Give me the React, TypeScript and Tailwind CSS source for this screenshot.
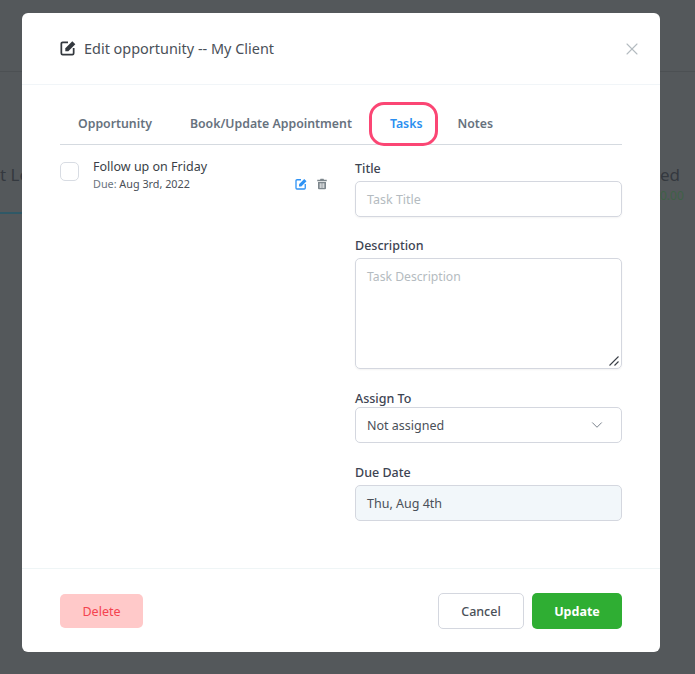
import { FC, ReactNode } from "react";
import { ChevronDown, X } from "lucide-react";

const FONT = "font-['Noto_Sans','Open_Sans',sans-serif]";

const EditIcon: FC<{ className?: string }> = ({ className }) => (
  <svg viewBox="0 0 24 24" className={className} fill="none">
    <path
      d="M12 3.500H4a2 2 0 0 0-2 2V20a2 2 0 0 0 2 2h14.500a2 2 0 0 0 2-2v-8"
      stroke="currentColor"
      strokeWidth="2.600"
    />
    <path d="M8 12.500 18.500 2 23 6.500 12.500 17H8z" fill="currentColor" />
  </svg>
);

const TrashIcon: FC<{ className?: string }> = ({ className }) => (
  <svg viewBox="0 0 24 24" className={className} fill="currentColor">
    <path d="M9 1.500h6l1 2h5.500v3H2.500v-3H8z" />
    <path
      fillRule="evenodd"
      d="M4 8h16v12.500a2 2 0 0 1-2 2H6a2 2 0 0 1-2-2zM7.500 10.500v9.500h1.800v-9.500zm3.600 0v9.500h1.800v-9.500zm3.600 0v9.500h1.800v-9.500z"
    />
  </svg>
);

const Label: FC<{ children: ReactNode }> = ({ children }) => (
  <div className="h-[18px] pt-[2px] text-[12.500px] leading-[16px] font-medium text-[#3d4452]">{children}</div>
);

const Tab: FC<{ label: string; active?: boolean; className?: string }> = ({ label, active, className }) => (
  <div
    className={`h-[18px] pt-[2px] text-[12.300px] leading-[16px] font-semibold ${active ? "text-[#2b8ff0]" : "text-[#67727e]"} ${className ?? ""}`}
  >
    {label}
  </div>
);

export default function App() {
  return (
    <div className={`relative h-[674px] w-[695px] overflow-hidden bg-[#54585b] ${FONT}`}>
      {/* page behind the overlay */}
      <div className="absolute left-0 right-0 top-[71px] h-px bg-[#4c5053]" />
      <div className="absolute left-0 top-[164px] whitespace-nowrap text-[17px] leading-[22px] text-[#34393f]">t Le</div>
      <div className="absolute left-0 top-[212px] h-[2px] w-[22px] bg-[#2f5866]" />
      <div className="absolute left-[660px] top-[164px] whitespace-nowrap text-[17px] leading-[22px] text-[#34393f]">ed</div>
      <div className="absolute left-[660px] top-[188px] z-10 whitespace-nowrap text-[12px] leading-[16px] text-[#3f6147]">0.00</div>

      {/* modal */}
      <div className="absolute left-[22px] top-[13px] flex h-[639px] w-[638px] flex-col rounded-[6px] bg-white">
        <div className="flex h-[72px] items-center justify-between border-b border-[#f1f5f8] pl-[38px] pr-[18px]">
          <div className="flex items-center gap-[8px]">
            <EditIcon className="h-[16px] w-[16px] text-[#34393f]" />
            <span className="text-[14.450px] text-[#4a5058]">Edit opportunity -- My Client</span>
          </div>
          <X className="h-[20px] w-[20px] text-[#b4bbc0]" strokeWidth={1.300} />
        </div>

        <div className="flex-1 px-[38px]">
          <div className="mt-[17px] flex h-[43px] items-center border-b border-[#d5dae0]">
            <Tab label="Opportunity" className="ml-[18px]" />
            <Tab label="Book/Update Appointment" className="ml-[38px]" />
            <div className="relative ml-[38px]">
              <Tab label="Tasks" active />
              <div className="absolute -left-[21px] -right-[16px] -top-[12px] h-[44px] rounded-[15px] border-[3px] border-[#fb4674]" />
            </div>
            <Tab label="Notes" className="ml-[35px]" />
          </div>

          <div className="flex pt-[14px]">
            <div className="flex w-[295px] shrink-0 items-start pr-[27px]">
              <div className="mt-[3px] h-[19px] w-[19px] shrink-0 rounded-[5px] border border-[#d8dce3] bg-white" />
              <div className="-mt-[1px] ml-[14px] flex-1">
                <div className="text-[12.500px] leading-[18px] text-[#3a3f47]">Follow up on Friday</div>
                <div className="flex items-center justify-between">
                  <div className="text-[10.800px] leading-[16px] text-[#4a5058]">
                    <span className="text-[#6b7480]">Due: </span>Aug 3rd, 2022
                  </div>
                  <div className="flex items-center gap-[9px]">
                    <EditIcon className="h-[12px] w-[12px] text-[#2f93f5]" />
                    <TrashIcon className="h-[12px] w-[12px] text-[#7d868c]" />
                  </div>
                </div>
              </div>
            </div>

            <div className="w-[267px] shrink-0">
              <Label>Title</Label>
              <div className="mt-[4px] flex h-[36px] items-center rounded-[5px] border border-[#d4d7df] px-[11px] pt-[2px] text-[12.500px] text-[#b4bbc0] shadow-[0_1px_2px_rgba(0,0,0,0.05)]">
                Task Title
              </div>

              <div className="mt-[19px]">
                <Label>Description</Label>
              </div>
              <div className="relative mt-[4px] h-[111px] rounded-[5px] border border-[#d4d7df] px-[11px] pt-[9px] text-[12.200px] leading-[18px] text-[#b4bbc0] shadow-[0_1px_2px_rgba(0,0,0,0.05)]">
                Task Description
                <svg viewBox="0 0 12 12" className="absolute bottom-[1px] right-[1px] h-[12px] w-[12px] text-[#3a3f47]">
                  <path d="M1.500 10.500 10.500 1.500M6.500 10.500l4-4" stroke="currentColor" strokeWidth="1.100" />
                </svg>
              </div>

              <div className="mt-[20px]">
                <Label>Assign To</Label>
              </div>
              <div className="flex h-[36px] items-center justify-between rounded-[5px] border border-[#d4d7df] pl-[11px] pr-[15px] text-[12.500px] text-[#4a5058]">
                <span className="pt-[2px]">Not assigned</span>
                <ChevronDown className="h-[18px] w-[18px] text-[#6b7480]" strokeWidth={1.200} />
              </div>

              <div className="mt-[20px]">
                <Label>Due Date</Label>
              </div>
              <div className="mt-[4px] flex h-[36px] items-center rounded-[5px] border border-[#d4d7df] bg-[#f2f7fa] px-[11px] pt-[2px] text-[12.500px] text-[#4a5058]">
                Thu, Aug 4th
              </div>
            </div>
          </div>
        </div>

        <div className="flex h-[84px] items-center justify-between border-t border-[#eff5f6] px-[38px]">
          <button className="h-[34px] w-[83px] rounded-[5px] bg-[#ffc9c9] pt-[3px] text-[12.500px] text-[#f4434f]">
            Delete
          </button>
          <div className="flex items-center gap-[8px]">
            <button className="h-[36px] w-[86px] rounded-[5px] border border-[#d4d7df] bg-white pt-[3px] text-[12.500px] font-medium text-[#4a5058]">
              Cancel
            </button>
            <button className="h-[36px] w-[90px] rounded-[5px] bg-[#2fae33] pt-[3px] text-[12.500px] font-bold text-white">
              Update
            </button>
          </div>
        </div>
      </div>
    </div>
  );
}
